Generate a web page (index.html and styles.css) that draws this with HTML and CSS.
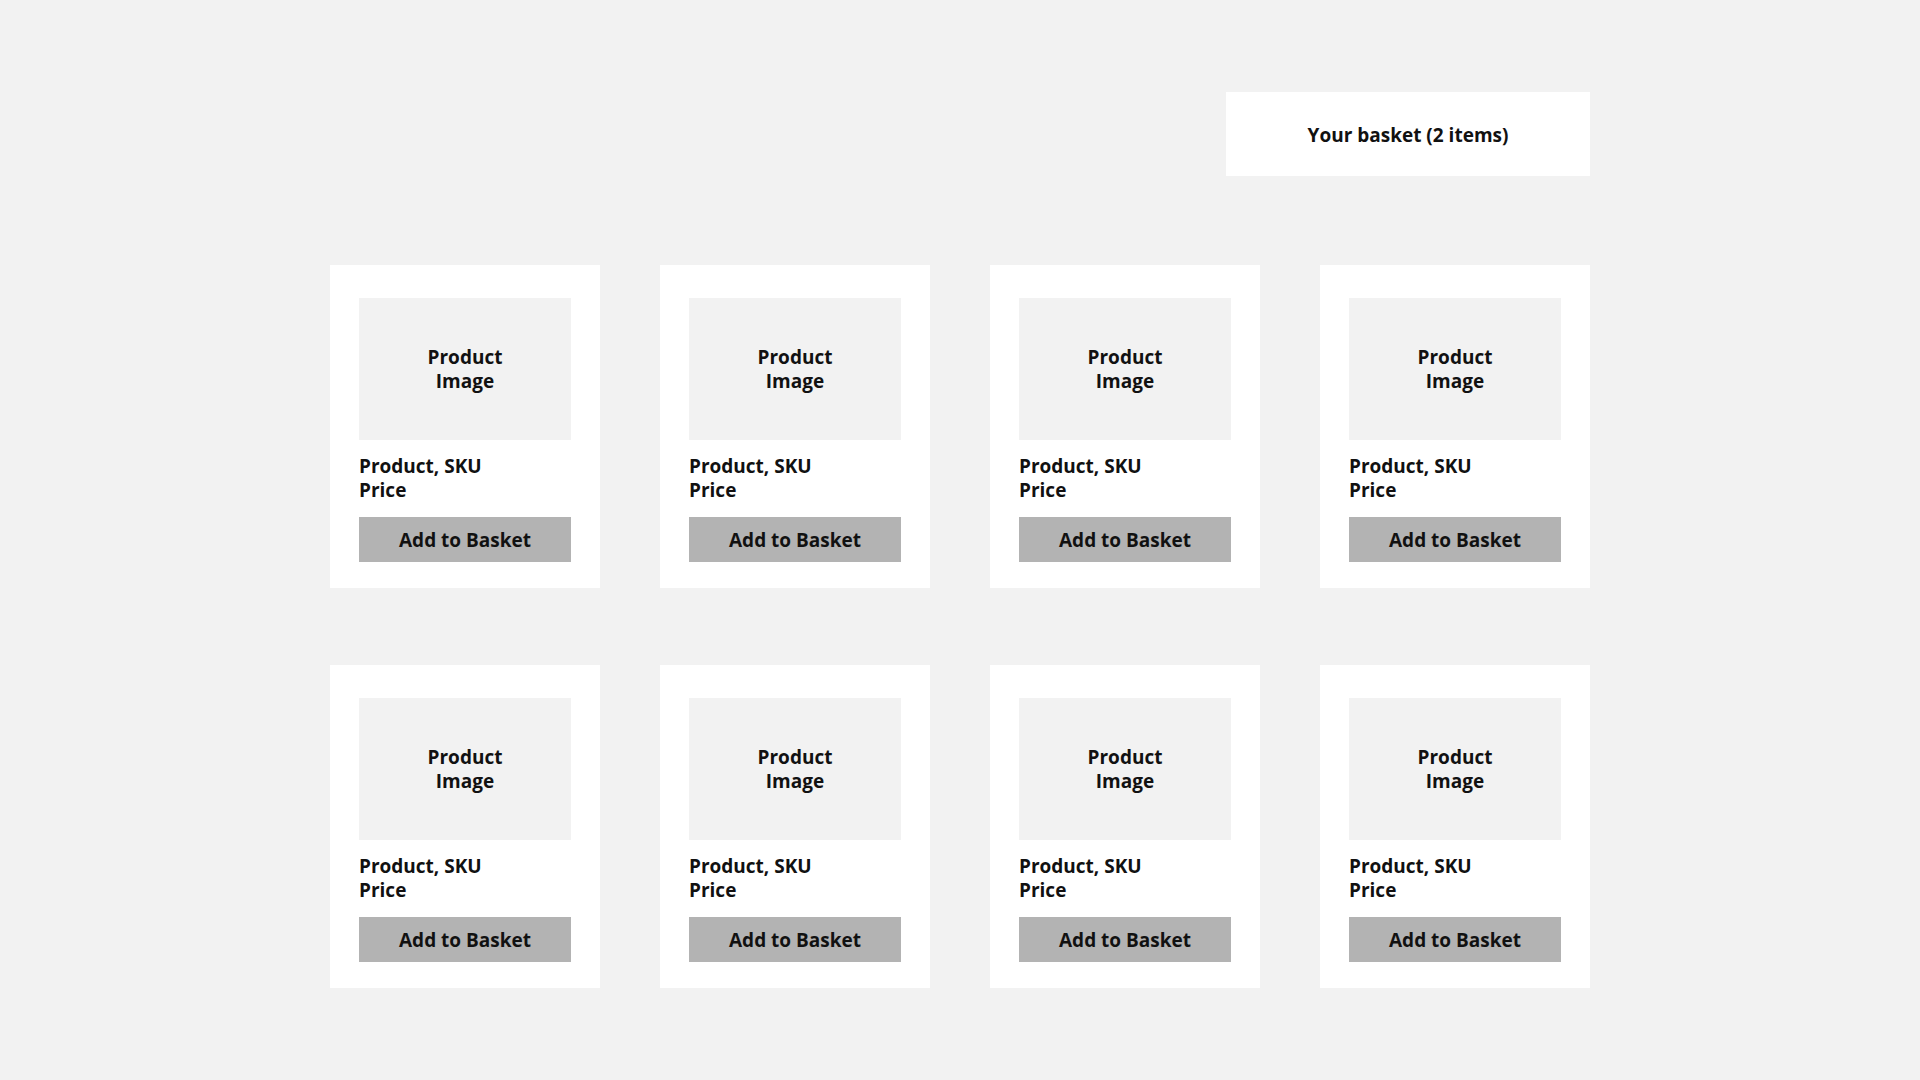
FILE: index.html
```html
<!DOCTYPE html>
<html lang="en">
<head>
<meta charset="utf-8">
<title>Shop</title>
<link rel="stylesheet" href="styles.css">
</head>
<body>
<div class="page">
  <header class="top">
    <div class="basket">Your basket (2 items)</div>
  </header>
  <main class="grid">
    <div class="card"><div class="img">Product<br>Image</div><div class="info">Product, SKU<br>Price</div><div class="btn">Add to Basket</div></div>
    <div class="card"><div class="img">Product<br>Image</div><div class="info">Product, SKU<br>Price</div><div class="btn">Add to Basket</div></div>
    <div class="card"><div class="img">Product<br>Image</div><div class="info">Product, SKU<br>Price</div><div class="btn">Add to Basket</div></div>
    <div class="card"><div class="img">Product<br>Image</div><div class="info">Product, SKU<br>Price</div><div class="btn">Add to Basket</div></div>
    <div class="card"><div class="img">Product<br>Image</div><div class="info">Product, SKU<br>Price</div><div class="btn">Add to Basket</div></div>
    <div class="card"><div class="img">Product<br>Image</div><div class="info">Product, SKU<br>Price</div><div class="btn">Add to Basket</div></div>
    <div class="card"><div class="img">Product<br>Image</div><div class="info">Product, SKU<br>Price</div><div class="btn">Add to Basket</div></div>
    <div class="card"><div class="img">Product<br>Image</div><div class="info">Product, SKU<br>Price</div><div class="btn">Add to Basket</div></div>
  </main>
</div>
</body>
</html>
```
FILE: styles.css
```css
html, body {
  margin: 0;
  padding: 0;
  background: #f2f2f2;
}
body {
  font-family: "Open Sans", "Noto Sans", sans-serif;
  font-weight: 700;
  color: #111;
}
.page {
  width: 1260px;
  margin: 0 auto;
  padding-top: 92px;
}
.top {
  display: flex;
  justify-content: flex-end;
}
.basket {
  width: 364px;
  height: 84px;
  background: #fff;
  display: flex;
  align-items: center;
  justify-content: center;
  font-size: 19px;
  padding-top: 2px;
  box-sizing: border-box;
}
.grid {
  margin-top: 89px;
  display: grid;
  grid-template-columns: repeat(4, 270px);
  column-gap: 60px;
  row-gap: 77px;
}
.card {
  background: #fff;
  padding: 33px 29px 26px;
  display: flex;
  flex-direction: column;
}
.img {
  height: 142px;
  background: #f2f2f2;
  display: flex;
  align-items: center;
  justify-content: center;
  text-align: center;
  font-size: 19px;
  line-height: 24px;
}
.info {
  margin-top: 14px;
  font-size: 19px;
  line-height: 24px;
}
.btn {
  margin-top: 15px;
  height: 45px;
  background: #b3b3b3;
  display: flex;
  align-items: center;
  justify-content: center;
  font-size: 19px;
}
```
